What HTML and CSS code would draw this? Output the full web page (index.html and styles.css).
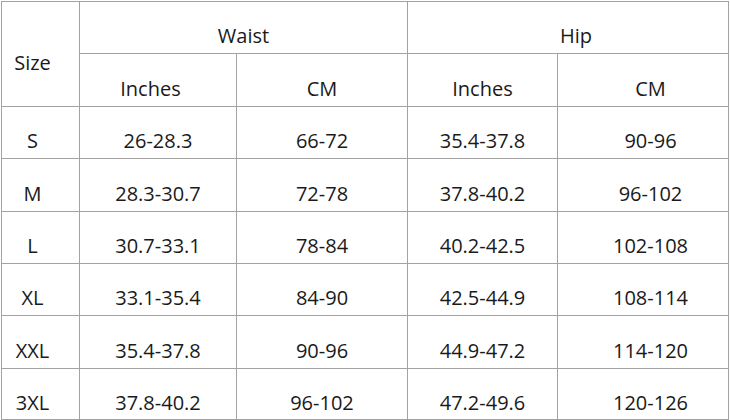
FILE: index.html
```html
<!DOCTYPE html>
<html lang="en">
<head>
<meta charset="utf-8">
<title>Size chart</title>
<link rel="stylesheet" href="styles.css">
</head>
<body>
<div class="chart">
  <div class="cell size-head">Size</div>
  <div class="cell waist-head">Waist</div>
  <div class="cell hip-head">Hip</div>
  <div class="cell c2h">Inches</div>
  <div class="cell">CM</div>
  <div class="cell">Inches</div>
  <div class="cell c5">CM</div>

  <div class="cell c1">S</div><div class="cell">26-28.3</div><div class="cell">66-72</div><div class="cell">35.4-37.8</div><div class="cell c5">90-96</div>
  <div class="cell c1">M</div><div class="cell">28.3-30.7</div><div class="cell">72-78</div><div class="cell">37.8-40.2</div><div class="cell c5">96-102</div>
  <div class="cell c1">L</div><div class="cell">30.7-33.1</div><div class="cell">78-84</div><div class="cell">40.2-42.5</div><div class="cell c5">102-108</div>
  <div class="cell c1">XL</div><div class="cell">33.1-35.4</div><div class="cell">84-90</div><div class="cell">42.5-44.9</div><div class="cell c5">108-114</div>
  <div class="cell c1">XXL</div><div class="cell">35.4-37.8</div><div class="cell">90-96</div><div class="cell">44.9-47.2</div><div class="cell c5">114-120</div>
  <div class="cell c1">3XL</div><div class="cell">37.8-40.2</div><div class="cell">96-102</div><div class="cell">47.2-49.6</div><div class="cell c5">120-126</div>
</div>
</body>
</html>
```

FILE: styles.css
```css
html, body {
  margin: 0;
  padding: 0;
  background: #ffffff;
}
body {
  padding: 1px 0 0 1px;
  font-family: "Open Sans", "Noto Sans", sans-serif;
  font-size: 20px;
  color: #1a1a1a;
}
.chart {
  display: grid;
  width: 726px;
  grid-template-columns: 77px 156px 170px 149px 170px;
  grid-template-rows: 51px 52px 51px 52px 51px 51px 52px 50px;
  gap: 1px;
  padding: 1px;
  background: #a3a3a3;
}
.cell {
  background: #ffffff;
  display: flex;
  align-items: center;
  justify-content: center;
  padding-top: 17px;
  box-sizing: border-box;
  white-space: nowrap;
  line-height: 1.362;
}
.size-head {
  grid-row: 1 / span 2;
  padding-right: 16px;
}
.waist-head {
  grid-column: 2 / span 2;
}
.hip-head {
  grid-column: 4 / span 2;
  padding-left: 16px;
}
.c1 {
  padding-right: 16px;
}
.c2h {
  padding-right: 15px;
}
.c5 {
  padding-left: 15px;
}
```
